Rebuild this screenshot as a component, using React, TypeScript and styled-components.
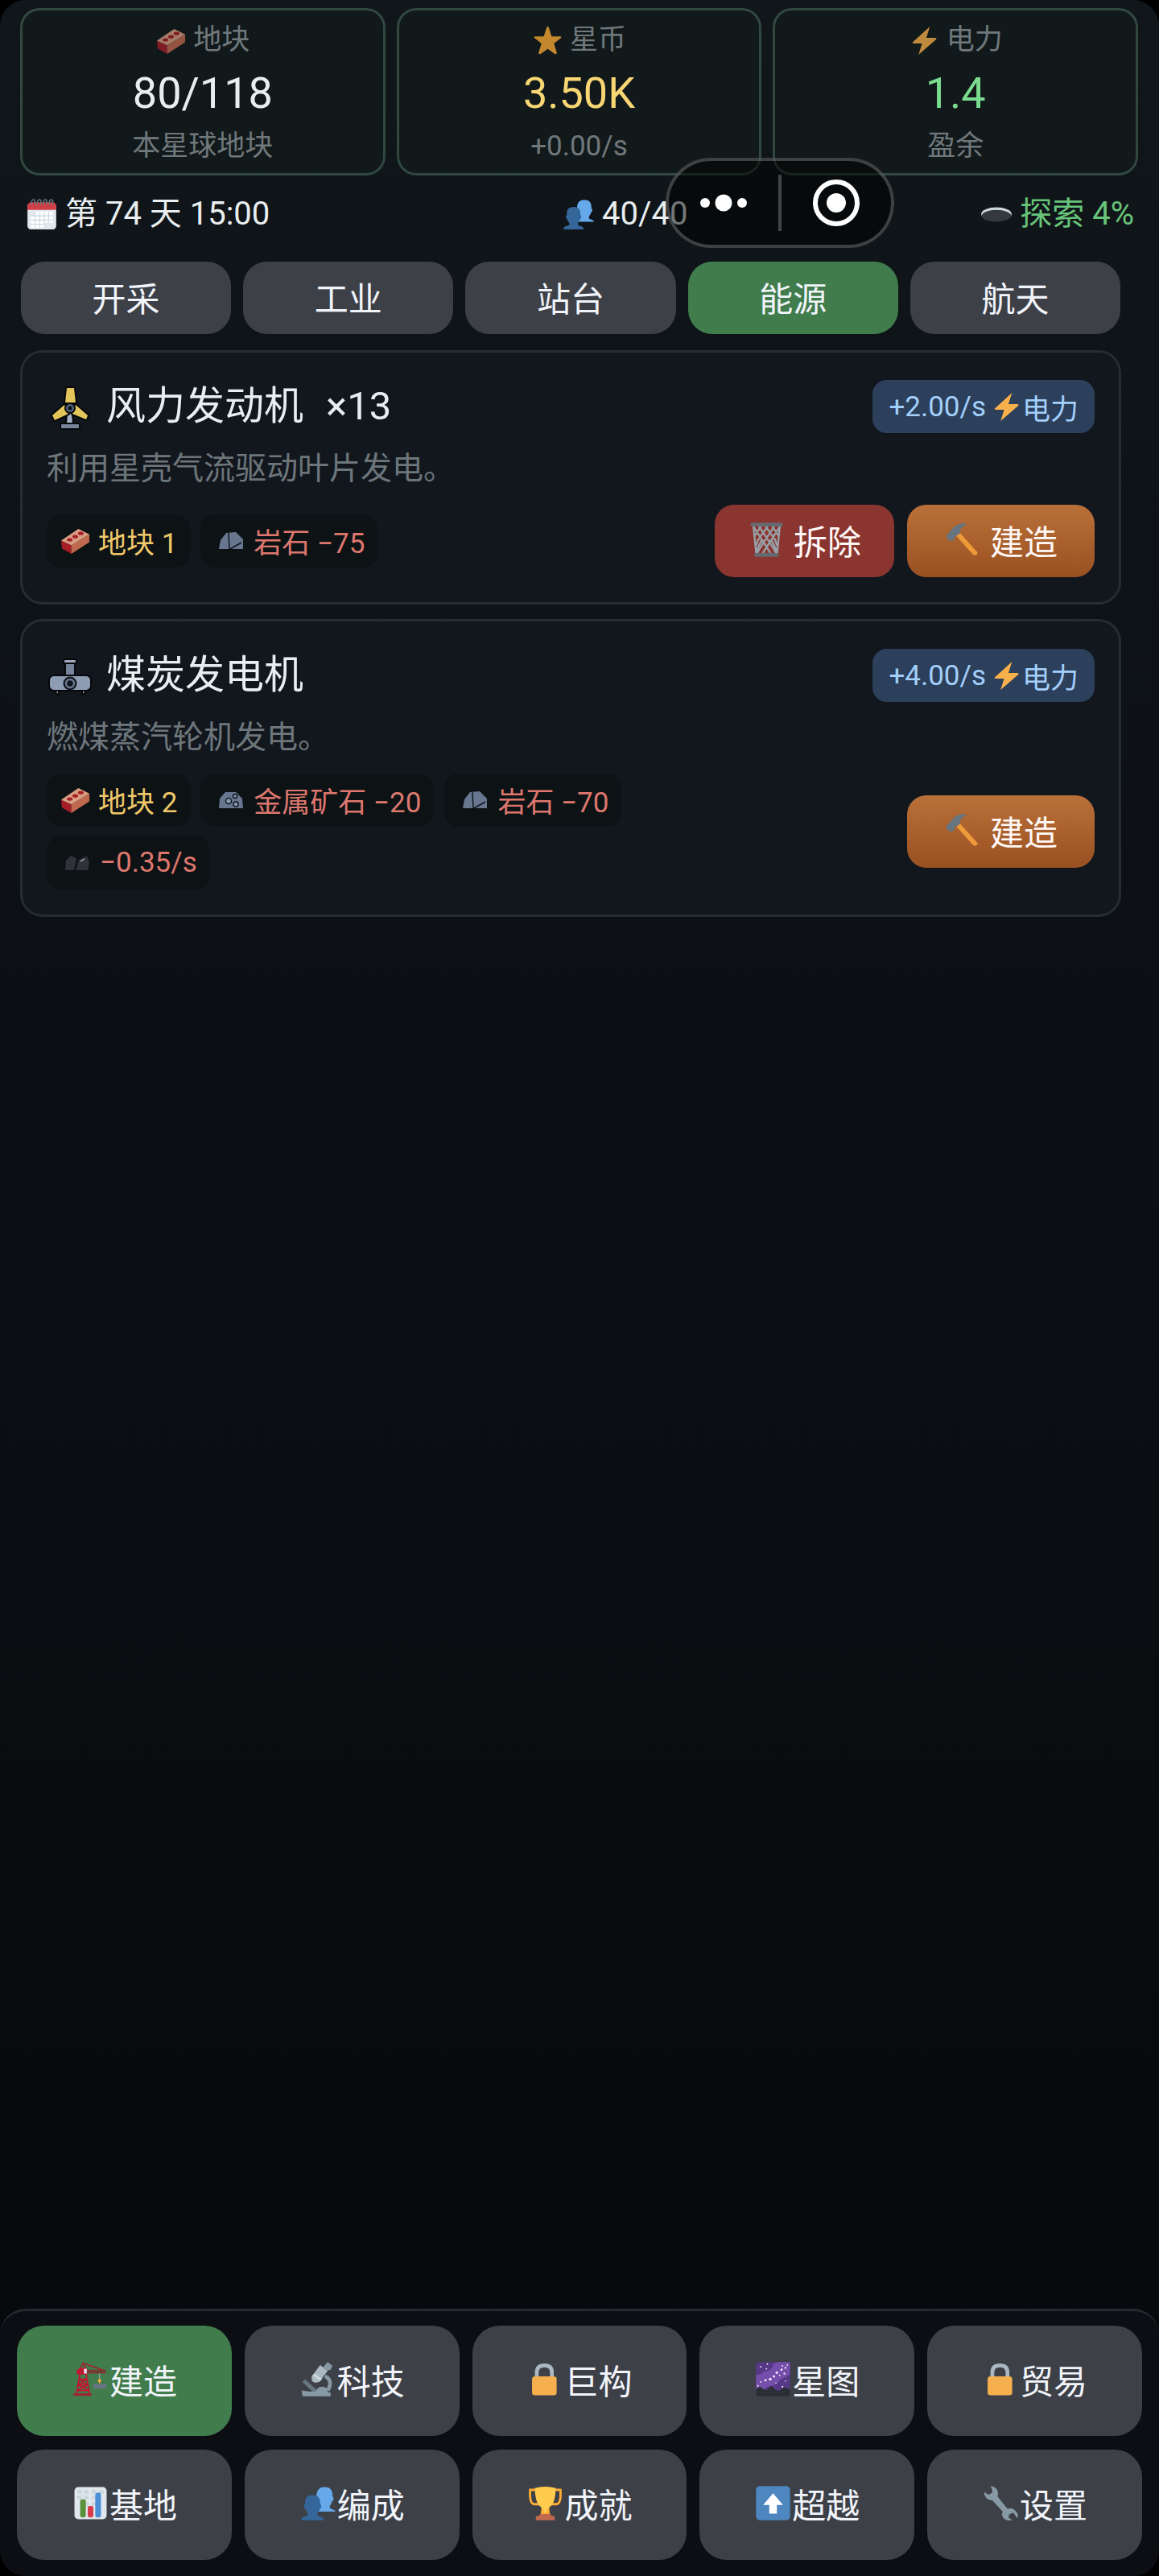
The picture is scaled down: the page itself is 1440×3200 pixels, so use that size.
import React, { useState } from "react";
import styled, { createGlobalStyle } from "styled-components";

const GlobalStyle = createGlobalStyle`
  * {
    box-sizing: border-box;
  }

  body {
    margin: 0;
    background: #000;
    color: #e9eef0;
    font-family: Roboto, "Noto Sans CJK SC", sans-serif;
  }

  button {
    font-family: inherit;
    border: 0;
    padding: 0 0 4px;
    cursor: pointer;
  }
`

const Shell = styled.div`
  position: relative;
  display: flex;
  flex-direction: column;
  min-height: 100vh;
  border-radius: 32px;
  overflow: hidden;
  background: linear-gradient(180deg, #10161a 0%, #0c1014 38%, #07080c 95%);
`

const Icon = styled.svg<{ $size: number }>`
  flex: none;
  width: ${(p) => p.$size}px;
  height: ${(p) => p.$size}px;
`

const Stats = styled.section`
  display: grid;
  grid-template-columns: repeat(3, 1fr);
  gap: 14px;
  padding: 10px 26px 0 25px;
`

const StatCard = styled.div`
  display: flex;
  flex-direction: column;
  align-items: center;
  padding: 12px 0 8px;
  border: 3px solid #31483f;
  border-radius: 24px;
  background: #11191b;
`

const StatLabel = styled.div`
  display: flex;
  align-items: center;
  gap: 8px;
  font-size: 35px;
  line-height: 50px;
  color: #8f989b;
  opacity: 0.75;
`

const StatValue = styled.div<{ $color: string }>`
  font-size: 54px;
  line-height: 82px;
  color: ${(p) => p.$color};
`

const StatSub = styled.div`
  font-size: 35px;
  line-height: 50px;
  color: #70787b;
`

const StatusRow = styled.div`
  display: flex;
  justify-content: space-between;
  align-items: center;
  padding: 22px 31px 0;
  font-size: 40px;
  line-height: 52px;
`

const StatusItem = styled.div<{ $color?: string }>`
  display: flex;
  align-items: center;
  gap: 8px;
  color: ${(p) => p.$color ?? "#e9eef0"};
`

const Tabs = styled.div`
  display: grid;
  grid-template-columns: repeat(5, 1fr);
  gap: 15px;
  padding: 33px 48px 0 26px;
`

const Tab = styled.button<{ $active: boolean }>`
  height: 90px;
  border-radius: 30px;
  font-size: 42px;
  color: #f1f4fa;
  background: ${(p) => (p.$active ? "#407c4c" : "#3d4047")};
`

const Content = styled.main`
  display: flex;
  flex: 1;
  flex-direction: column;
  gap: 18px;
  padding: 20px 47px 40px 25px;
`

const Card = styled.article`
  padding: 31px 30px;
  border: 3px solid #252c32;
  border-radius: 28px;
  background: #12171e;
`

const CardHeader = styled.header`
  display: flex;
  align-items: center;
  height: 72px;
`

const CardTitle = styled.h2`
  margin: 0 0 0 16px;
  font-size: 49px;
  font-weight: 400;
  line-height: 72px;
  white-space: pre;
`

const Count = styled.span`
  margin-left: 28px;
`

const Badge = styled.span`
  display: flex;
  align-items: center;
  height: 66px;
  margin-left: auto;
  padding: 0 20px;
  border-radius: 18px;
  font-size: 35px;
  color: #a3cffb;
  background: #2c405c;
`

const BadgeRate = styled.span`
  margin-right: 6px;
`

const CardDesc = styled.p`
  margin: 13px 0 17px;
  font-size: 39px;
  line-height: 56px;
  color: #6d767b;
`

const CardFooter = styled.div`
  display: flex;
  align-items: center;
  justify-content: space-between;
  gap: 16px;
`

const Chips = styled.div`
  display: flex;
  flex-wrap: wrap;
  gap: 12px 13px;
`

const Chip = styled.span<{ $color: string }>`
  display: flex;
  align-items: center;
  gap: 9px;
  height: 66px;
  padding: 0 16px 2px;
  border-radius: 18px;
  font-size: 35px;
  color: ${(p) => p.$color};
  background: #0d1215;
`

const Actions = styled.div`
  display: flex;
  flex: none;
  justify-content: flex-end;
  gap: 16px;
  min-width: 472px;
`

const ActionButton = styled.button<{ $kind: "remove" | "build" }>`
  display: flex;
  align-items: center;
  justify-content: center;
  gap: 10px;
  min-width: ${(p) => (p.$kind === "build" ? 233 : 223)}px;
  height: 90px;
  border-radius: 24px;
  font-size: 42px;
  color: #fff8f6;
  background: ${(p) => (p.$kind === "build" ? "linear-gradient(180deg, #b97038, #9a5122)" : "#8a352f")};
`

const BottomNav = styled.nav`
  display: grid;
  grid-template-columns: repeat(5, 1fr);
  gap: 17px 16px;
  padding: 18px 21px 20px;
  border-top: 3px solid #242a2f;
  border-radius: 32px 32px 0 0;
  background: #0d0e13;
`

const NavButton = styled.button<{ $active: boolean }>`
  display: flex;
  align-items: center;
  justify-content: center;
  height: 137px;
  border-radius: 34px;
  font-size: 42px;
  color: #f1f4fa;
  background: ${(p) => (p.$active ? "#407c4c" : "#3d4047")};
`

// Host app's floating menu, drawn over the page
const Capsule = styled.div`
  position: absolute;
  top: 196px;
  right: 329px;
  display: flex;
  align-items: center;
  width: 284px;
  height: 112px;
  border: 4px solid rgba(255, 255, 255, 0.22);
  border-radius: 56px;
  background: rgba(0, 0, 0, 0.5);
`

const CapsuleButton = styled.button`
  display: flex;
  flex: 1;
  align-items: center;
  justify-content: center;
  height: 100%;
  padding: 0;
  background: transparent;
`

const CapsuleDivider = styled.span`
  width: 4px;
  height: 70px;
  background: rgba(255, 255, 255, 0.24);
`

type IconName =
    | "brick" | "star" | "bolt" | "calendar" | "people" | "hole"
    | "trash" | "hammer" | "crane" | "microscope" | "lock" | "galaxy"
    | "chart" | "trophy" | "up" | "wrench"

const emoji: Record<IconName, React.ReactNode> = {
    brick: (
        <>
            <path d="M0 18 L13 24 V35 L1 28 Z" fill="#a51e28"/>
            <path d="M13 24 L36 10 V20 L13 35 Z" fill="#c1694f"/>
            <path d="M0 18 L22 3 L36 10 L13 24 Z" fill="#d99e82"/>
            <g fill="#a51e28">
                <ellipse cx="11" cy="17" rx="3.6" ry="2.2"/>
                <ellipse cx="18" cy="13" rx="3.6" ry="2.2"/>
                <ellipse cx="25" cy="9" rx="3.6" ry="2.2"/>
            </g>
        </>
    ),
    star: (
        <path
            d="M18 0 Q19 0 19.500 1.500 L23 12.500 H34 Q36.500 13 34.500 15 L26 21.500 L29.500 33 Q29.500 36 27 35 L18 28.500 L9 35 Q6.500 36 6.500 33 L10 21.500 L1.500 15 Q-0.500 13 2 12.500 H13 L16.500 1.500 Q17 0 18 0 Z"
            fill="#ffac33"
        />
    ),
    bolt: <path d="M25 0 L3 20 Q2.500 21.500 4 21.500 H15 L10.500 36 L33 16.500 Q34 14.500 32 14.500 H20.500 Z" fill="#f8b04a"/>,
    calendar: (
        <>
            <rect x="1" y="5" width="34" height="31" rx="4" fill="#e1e8ed"/>
            <path d="M1 13 V9 Q1 4 6 4 H30 Q35 4 35 9 V13 Z" fill="#cf3f46"/>
            <g fill="none" stroke="#66757f" strokeWidth="1.5">
                <path d="M6 7 Q5 0 9 1 Q11 3 9 7 M13 7 Q12 0 16 1 Q18 3 16 7 M20 7 Q19 0 23 1 Q25 3 23 7 M27 7 Q26 0 30 1 Q32 3 30 7"/>
            </g>
            <path d="M10 15 H31 V28 H21 V34 H5 V20 H10 Z" fill="#fff"/>
            <path d="M5 20 H31 M5 25 H31 M5 30 H21 M10 15 V34 M15.500 15 V34 M21 15 V34 M26 15 V28" stroke="#ccd6dd" strokeWidth="1"/>
        </>
    ),
    people: (
        <>
            <path d="M25 1 C31 1 33.500 5 33 11 C35 12 34 16 32.500 16 C32 19 30 20 30 22 C30 25 36 24 36 27 H17 V20 C16 18 15.500 16 16 12 C16 5 18 1 25 1 Z" fill="#65a9ea"/>
            <path d="M12 9.500 C18 9.500 20.500 13 20 19 C22 20 21 24 19.500 24 C19 27 17 28 17 30 C17 33 23.500 31 24 36 H0 C0 31 7 33 7 30 C7 28 5 27 4.500 24 C3 24 2 20 4 19 C3.500 13 6 9.500 12 9.500 Z" fill="#35669a"/>
        </>
    ),
    hole: (
        <>
            <ellipse cx="18" cy="18" rx="18" ry="8" fill="#ccd6dd"/>
            <ellipse cx="18" cy="20" rx="17.500" ry="7" fill="#33393e"/>
        </>
    ),
    trash: (
        <>
            <path d="M4 3 L7 33 H29 L32 3" fill="none" stroke="#99a1a8" strokeWidth="2"/>
            <path
                d="M4 4 L13 18 L7 30 M10 4 L22 22 L28 32 M17 4 L27 18 L29 24 M24 4 L31 14 M32 4 L23 18 L29 30 M26 4 L14 22 L8 32 M19 4 L9 18 L7 24 M12 4 L5 14 M13 18 L22 32 M23 18 L14 32"
                fill="none"
                stroke="#99a1a8"
                strokeWidth="2"
            />
            <rect x="1" y="0" width="34" height="4" rx="1.500" fill="#66696f"/>
            <rect x="5" y="32" width="26" height="4" rx="1.500" fill="#66696f"/>
        </>
    ),
    hammer: (
        <>
            <path d="M11 14 L15 11 L33 31 Q34 33 32 34 Q30 35 28 33 Z" fill="#ee9a38"/>
            <path d="M0 14 L9 4 Q14 0 21 1 Q22 2 20 3 Q14 5 15 11 L9 15 Q9 19 6 19 Q3 20 1 16 Z" fill="#66757f"/>
        </>
    ),
    crane: (
        <>
            <path d="M7 8 L10 1 L33 9 M10 1 L14 8" fill="none" stroke="#a02331" strokeWidth="1.300"/>
            <rect x="11" y="8" width="23" height="4" fill="#8c2f31"/>
            <path d="M15 11 L18 9 L21 11 L24 9 L27 11 L30 9 L33 11" fill="none" stroke="#4f5335" strokeWidth="1"/>
            <path d="M7 11 L3 34 M13 11 L17 34 M6 18 H14 M5 24 H15 M4 30 H16 M6 18 L15 24 L4 30 M14 18 L5 24 L16 30" fill="none" stroke="#be1931" strokeWidth="1.600"/>
            <path d="M3 9 Q5 6 9 6 H14 V13 H4 Z" fill="#be1931"/>
            <rect x="11" y="7" width="3" height="5" fill="#e1e8ed"/>
            <rect x="0" y="33" width="19" height="2.500" fill="#a02331"/>
            <path d="M27.500 12 V19" stroke="#99aab5" strokeWidth="1"/>
            <path d="M26 18 H29 V21 H28 V24 H27 V21 H26 Z" fill="#ffac33"/>
            <rect x="21" y="23" width="14" height="5" fill="#66757f"/>
        </>
    ),
    microscope: (
        <>
            <path d="M25 15 Q34 19 28 30" fill="none" stroke="#8899a6" strokeWidth="4"/>
            <path d="M1 21 L4 18 L17 30 L14 33 Z" fill="#66757f"/>
            <path d="M0 30 L8 31 H15 Q18 25 23 26 Q28 26 28 32 H31 V36 H2 Q1 36 1 33 Z" fill="#8899a6"/>
            <path d="M11 15 L20 3 L28 9 L19 21 Q13 23 11 19 Z" fill="#aab8c2"/>
            <path d="M14 12 L22 18 L20 20 L12 14 Z" fill="#ccd6dd"/>
            <path d="M25 3 L28 0 L33 4 L31 8 L27 9 L23 6 Z" fill="#8899a6"/>
        </>
    ),
    lock: (
        <>
            <path d="M9 17 V11 Q9 3.500 17 3.500 Q25 3.500 25 11 V17" fill="none" stroke="#aab8c2" strokeWidth="4"/>
            <rect x="4" y="15" width="26" height="20" rx="3" fill="#f5b04d"/>
        </>
    ),
    galaxy: (
        <>
            <rect width="36" height="36" rx="3" fill="#553986"/>
            <path d="M0 13 Q6 14 8 10 Q13 10 17 6 Q18 0 24 0 H36 V13 Q29 17 26 18 Q22 25 12 26 Q6 32 0 28 Z" fill="#744eaa"/>
            <path d="M0 29 Q4 24 7 28 Q10 31 13 28 Q16 23 19 28 Q23 32 26 29 Q30 25 36 29 V33 Q36 36 33 36 H3 Q0 36 0 33 Z" fill="#292f33"/>
            <g fill="#f1e4fa">
                <circle cx="15" cy="18" r="1.500"/>
                <circle cx="19" cy="15" r="1.300"/>
                <circle cx="22" cy="11" r="1.400"/>
                <circle cx="10" cy="19" r="1.300"/>
                <circle cx="27" cy="8" r="1.200"/>
                <circle cx="31" cy="6" r="1"/>
                <circle cx="33" cy="3" r="0.800"/>
                <circle cx="28" cy="4" r="0.800"/>
                <circle cx="11" cy="7" r="0.800"/>
                <circle cx="5" cy="5" r="0.800"/>
                <circle cx="12" cy="2" r="0.800"/>
                <circle cx="2" cy="25" r="0.900"/>
                <circle cx="5" cy="21" r="0.800"/>
                <circle cx="28" cy="26" r="0.900"/>
                <circle cx="31" cy="20" r="0.700"/>
                <circle cx="21" cy="22" r="0.700"/>
                <circle cx="25" cy="14" r="0.800"/>
                <circle cx="30" cy="12" r="1"/>
            </g>
        </>
    ),
    chart: (
        <>
            <rect x="1" y="1" width="34" height="34" rx="4" fill="#e1e8ed"/>
            <path d="M4 4 H9 V8 H4 Z M11 4 H16 V8 H11 Z M19 4 H24 V8 H19 Z M27 4 H32 V8 H27 Z M4 10 H9 V14 H4 Z M11 10 H16 V14 H11 Z M19 10 H24 V14 H19 Z M11 17 H16 V21 H11 Z M19 17 H24 V21 H19 Z" fill="#ccd6dd"/>
            <rect x="7" y="14" width="6" height="19" rx="2" fill="#5c913b"/>
            <rect x="15" y="21" width="6" height="12" rx="2" fill="#d83c4c"/>
            <rect x="23" y="7" width="6" height="26" rx="2" fill="#4a8ed6"/>
        </>
    ),
    trophy: (
        <>
            <path d="M8 4 H2 Q1 18 6 19 H13 M28 4 H34 Q35 18 30 19 H23" fill="none" stroke="#ffac33" strokeWidth="2.500"/>
            <path d="M14 22 H22 L23 31 H13 Z" fill="#ffac33"/>
            <path d="M7 2 Q18 -1 29 2 Q29 16 24 21 Q20 24 19.500 28 H16.500 Q16 24 12 21 Q7 16 7 2 Z" fill="#ffcc4d"/>
            <path d="M8 36 V33 Q8 31.500 10 31.500 H12 V29.500 H24 V31.500 H26 Q28 31.500 28 33 V36 Z" fill="#c1694f"/>
        </>
    ),
    up: (
        <>
            <rect width="36" height="36" rx="4" fill="#4e86bf"/>
            <path d="M18 7.500 L28.500 20 H22 V29 H14 V20 H7.500 Z" fill="#fff"/>
        </>
    ),
    wrench: (
        <path
            d="M7 0 Q15 1 15 8 Q15 10 14.500 11 L25 24 Q31 22 35 28 Q37 31 35.500 34 L31 28 L27 30 L26 33 L30 36 Q21 38 19 30 L20 27 L9 15 Q3 15 1 10 L0 6 L5 9 L9 7 L9 4 Z"
            fill="#8899a6"
        />
    ),
}

const Emoji = ({ name, size }: { name: IconName, size: number }) => (
    <Icon $size={size} viewBox="-2 -2 40 40" aria-hidden="true">{emoji[name]}</Icon>
)

const WindTurbine = () => (
    <Icon $size={58} viewBox="0 0 58 58" aria-hidden="true">
        <g stroke="#06080b" strokeWidth="4" strokeLinejoin="round" paintOrder="stroke">
            <path d="M26 38 H31 L32 50 H25 Z" fill="#a5b3c6"/>
            <rect x="18" y="51" width="22" height="5" rx="1" fill="#75839b"/>
            <path d="M25 6 H34 L36 24 H23 Z" fill="#e2c65c"/>
            <path d="M22 27 L7 40 L10 46 L27 38 Z" fill="#e2c65c"/>
            <path d="M36 27 L51 40 L49 45 L32 38 Z" fill="#e2c65c"/>
            <circle cx="29" cy="31" r="5" fill="#56647c"/>
        </g>
        <circle cx="29" cy="31" r="2.500" fill="#0b0f16"/>
    </Icon>
)

const CoalGenerator = () => (
    <Icon $size={58} viewBox="0 0 58 58" aria-hidden="true">
        <g stroke="#06080b" strokeWidth="4" strokeLinejoin="round" paintOrder="stroke">
            <rect x="24" y="14" width="10" height="15" fill="#75839b"/>
            <rect x="22" y="10" width="14" height="3" rx="1" fill="#9aa9bd"/>
            <path d="M11 48 L14 52 V48 Z M48 48 L45 52 V48 Z" fill="#9aa9bd"/>
            <rect x="4" y="30" width="50" height="17" rx="5" fill="#8d9cb3"/>
        </g>
        <circle cx="29" cy="39" r="8.500" fill="#10151d"/>
        <circle cx="29" cy="39" r="5" fill="#10151d" stroke="#6a7990" strokeWidth="2.500"/>
    </Icon>
)

const Rock = () => (
    <Icon $size={41} viewBox="0 0 41 41" aria-hidden="true">
        <path d="M7 31 L9 20 L16 11 L28 10 L37 19 V31 Z" fill="#68778f"/>
        <path d="M19 11 L20 31 M35 23 L21 31" stroke="#10151d" strokeWidth="1.500"/>
    </Icon>
)

const Ore = () => (
    <Icon $size={41} viewBox="0 0 41 41" aria-hidden="true">
        <path d="M7 31 L8 19 L15 11 H28 L36 19 L37 31 Z" fill="#68778f"/>
        <g fill="#8d9cb3" stroke="#10151d" strokeWidth="1.500">
            <circle cx="19" cy="22" r="3.500"/>
            <circle cx="27" cy="16" r="2.500"/>
            <circle cx="28" cy="26" r="3"/>
        </g>
    </Icon>
)

const Coal = () => (
    <Icon $size={41} viewBox="0 0 41 41" aria-hidden="true">
        <g fill="#2f3238">
            <path d="M7 30 L8 18 L14 12 L21 15 L18 30 Z"/>
            <path d="M20 30 L24 17 L34 12 L37 21 L35 30 Z"/>
        </g>
        <path d="M26 19 L31 16" stroke="#8d949c" strokeWidth="1.500"/>
    </Icon>
)

const GOLD = "#f0c869"
const RED = "#dd776d"

const stats: { icon: IconName, label: string, value: string, sub: string, color: string }[] = [
    { icon: "brick", label: "地块", value: "80/118", sub: "本星球地块", color: "#e9eef0" },
    { icon: "star", label: "星币", value: "3.50K", sub: "+0.00/s", color: "#f8d673" },
    { icon: "bolt", label: "电力", value: "1.4", sub: "盈余", color: "#7bdc90" },
]

const tabs = ["开采", "工业", "站台", "能源", "航天"]

const buildings = [
    {
        name: "风力发动机",
        count: 13,
        icon: <WindTurbine/>,
        rate: "+2.00/s",
        desc: "利用星壳气流驱动叶片发电。",
        costs: [
            { icon: <Emoji name="brick" size={39}/>, text: "地块 1", color: GOLD },
            { icon: <Rock/>, text: "岩石 −75", color: RED },
        ],
    },
    {
        name: "煤炭发电机",
        count: 0,
        icon: <CoalGenerator/>,
        rate: "+4.00/s",
        desc: "燃煤蒸汽轮机发电。",
        costs: [
            { icon: <Emoji name="brick" size={39}/>, text: "地块 2", color: GOLD },
            { icon: <Ore/>, text: "金属矿石 −20", color: RED },
            { icon: <Rock/>, text: "岩石 −70", color: RED },
            { icon: <Coal/>, text: "−0.35/s", color: RED },
        ],
    },
]

const navItems: { icon: IconName, label: string }[] = [
    { icon: "crane", label: "建造" },
    { icon: "microscope", label: "科技" },
    { icon: "lock", label: "巨构" },
    { icon: "galaxy", label: "星图" },
    { icon: "lock", label: "贸易" },
    { icon: "chart", label: "基地" },
    { icon: "people", label: "编成" },
    { icon: "trophy", label: "成就" },
    { icon: "up", label: "超越" },
    { icon: "wrench", label: "设置" },
]

export default function App() {
    const [tab, setTab] = useState("能源");
    const [page, setPage] = useState("建造");
    return (
        <>
            <GlobalStyle/>
            <Shell>
                <Stats>
                    {stats.map((s) => (
                        <StatCard key={s.label}>
                            <StatLabel><Emoji name={s.icon} size={39}/>{s.label}</StatLabel>
                            <StatValue $color={s.color}>{s.value}</StatValue>
                            <StatSub>{s.sub}</StatSub>
                        </StatCard>
                    ))}
                </Stats>
                <StatusRow>
                    <StatusItem><Emoji name="calendar" size={42}/>第 74 天 15:00</StatusItem>
                    <StatusItem><Emoji name="people" size={42}/>40/40</StatusItem>
                    <StatusItem $color="#68c47a"><Emoji name="hole" size={42}/>探索 4%</StatusItem>
                </StatusRow>
                <Tabs>
                    {tabs.map((t) => (
                        <Tab key={t} $active={t === tab} onClick={() => setTab(t)}>{t}</Tab>
                    ))}
                </Tabs>
                <Content>
                    {buildings.map((b) => (
                        <Card key={b.name}>
                            <CardHeader>
                                {b.icon}
                                <CardTitle>
                                    {b.name}
                                    {b.count > 0 && <Count>×{b.count}</Count>}
                                </CardTitle>
                                <Badge>
                                    <BadgeRate>{b.rate}</BadgeRate>
                                    <Emoji name="bolt" size={39}/>
                                    电力
                                </Badge>
                            </CardHeader>
                            <CardDesc>{b.desc}</CardDesc>
                            <CardFooter>
                                <Chips>
                                    {b.costs.map((c) => (
                                        <Chip key={c.text} $color={c.color}>{c.icon}{c.text}</Chip>
                                    ))}
                                </Chips>
                                <Actions>
                                    {b.count > 0 && (
                                        <ActionButton $kind="remove"><Emoji name="trash" size={47}/>拆除</ActionButton>
                                    )}
                                    <ActionButton $kind="build"><Emoji name="hammer" size={47}/>建造</ActionButton>
                                </Actions>
                            </CardFooter>
                        </Card>
                    ))}
                </Content>
                <BottomNav>
                    {navItems.map((n) => (
                        <NavButton key={n.label} $active={n.label === page} onClick={() => setPage(n.label)}>
                            <Emoji name={n.icon} size={47}/>
                            {n.label}
                        </NavButton>
                    ))}
                </BottomNav>
                <Capsule>
                    <CapsuleButton aria-label="更多">
                        <svg width="60" height="24" viewBox="0 0 60 24" fill="#fff">
                            <circle cx="7" cy="12" r="6"/>
                            <circle cx="30" cy="12" r="10.500"/>
                            <circle cx="53" cy="12" r="6"/>
                        </svg>
                    </CapsuleButton>
                    <CapsuleDivider/>
                    <CapsuleButton aria-label="关闭">
                        <svg width="58" height="58" viewBox="0 0 58 58">
                            <circle cx="29" cy="29" r="26" fill="none" stroke="#fff" strokeWidth="6"/>
                            <circle cx="29" cy="29" r="12" fill="#fff"/>
                        </svg>
                    </CapsuleButton>
                </Capsule>
            </Shell>
        </>
    )
}
